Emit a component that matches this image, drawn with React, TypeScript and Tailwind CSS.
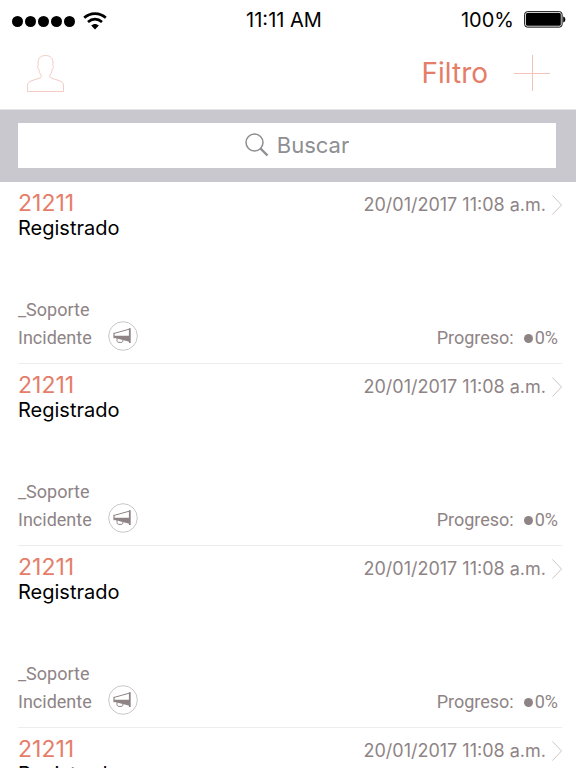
import React, { useState } from 'react';

interface Ticket {
  id: number;
  code: string;
  status: string;
  date: string;
  group: string;
  type: string;
  progress: number;
}

const tickets: Ticket[] = [1, 2, 3, 4].map((id) => ({
  id,
  code: '21211',
  status: 'Registrado',
  date: '20/01/2017 11:08 a.m.',
  group: '_Soporte',
  type: 'Incidente',
  progress: 0
}));

const WifiIcon = () => (
  <svg width="24" height="18" viewBox="0 0 24 18" fill="none" aria-hidden="true">
    <path d="M1.2 5.8C7.2 0.2 16.8 0.2 22.8 5.8" stroke="black" strokeWidth="2.6" />
    <path d="M5 10C9.2 6.2 14.8 6.2 19 10" stroke="black" strokeWidth="2.6" />
    <path d="M8.2 13.6C10.3 11.4 13.7 11.4 15.8 13.6L12 17.6Z" fill="black" />
  </svg>
);

const BatteryIcon = () => (
  <svg width="42" height="18" viewBox="0 0 42 18" fill="none" aria-hidden="true">
    <rect x="0.7" y="0.7" width="37.4" height="15.4" rx="2.6" stroke="black" strokeWidth="1" />
    <rect x="2" y="2" width="34.8" height="12.8" rx="1.4" fill="black" />
    <path d="M39.2 5.5C42 6 42 11 39.2 11.5Z" fill="black" />
  </svg>
);

const PersonIcon = () => (
  <svg width="38" height="38" viewBox="0 0 38 38" fill="none" aria-hidden="true">
    <path
      d="M0.5 37.5V32C0.5 28.8 2 27.6 5 26.6L12 24.3C14 23.6 14.6 22.8 14.2 21.2C12.9 19.8 12.2 18 12 15.8C10.6 15 10.3 12 11.3 11.3C10.2 5 13 1.5 18.5 1.5C24 1.5 26.9 5 25.8 11.3C26.8 12 26.5 15 25 15.8C24.8 18 24.2 19.8 22.9 21.2C22.5 22.8 23.1 23.6 25 24.3L32 26.6C35 27.6 36.5 28.8 36.5 32V37.5Z"
      stroke="#f3cbc4"
    />
  </svg>
);

const MegaphoneIcon = () => (
  <svg width="30" height="30" viewBox="0 0 30 30" fill="none" aria-hidden="true">
    <circle cx="15" cy="15" r="14.3" stroke="#c4c0c1" strokeWidth="0.9" />
    <path d="M6.2 12.4L21.8 8" stroke="#8e8486" strokeWidth="1" />
    <path d="M6 14.8H21.5V20.8L6 16.8Z" fill="#8e8486" />
    <path d="M6 11.8V17.2" stroke="#8e8486" strokeWidth="1.2" />
    <path d="M21.8 7.2V22" stroke="#8e8486" strokeWidth="1.8" />
    <path d="M9 17V19.4C9 20.8 9.8 21.4 11 21.4H13C14.4 21.4 15 20.6 15 19" stroke="#8e8486" strokeWidth="1" />
  </svg>
);

const TicketRow: React.FC<{ ticket: Ticket }> = ({ ticket }) => (
  <li className="pl-[18px] pr-3.5">
    <a href="#" className="flex min-h-[182px] flex-col justify-between border-b border-[#ededed] pt-2 pb-3">
      <div className="flex items-start justify-between">
        <div>
          <h2 className="text-[23px] leading-[26px] text-[#e57d69]">{ticket.code}</h2>
          <p className="text-[20px] leading-6 text-black">{ticket.status}</p>
        </div>
        <div className="flex items-center gap-1.5 pt-1 text-[18px] leading-[22px]">
          <time>{ticket.date}</time>
          <svg width="10" height="20" viewBox="0 0 10 20" fill="none" aria-hidden="true">
            <path d="M0.5 0.5L9.5 10L0.5 19.5" stroke="#c9c7c8" />
          </svg>
        </div>
      </div>
      <div className="font-['Roboto',sans-serif] text-[18px] leading-[22px]">
        <p>{ticket.group}</p>
        <div className="flex items-center justify-between">
          <div className="flex items-center gap-4">
            <span className="pt-1">{ticket.type}</span>
            <MegaphoneIcon />
          </div>
          <div className="flex items-center pt-1 pr-1">
            <span className="mr-2.5">Progreso:</span>
            <span className="mr-0.5 size-[9px] rounded-full bg-[#8e8486]" />
            <span>{ticket.progress}%</span>
          </div>
        </div>
      </div>
    </a>
  </li>
);

export default function App() {
  const [query, setQuery] = useState('');

  return (
    <div className="flex h-screen flex-col overflow-hidden bg-white font-['Inter',sans-serif] text-[#8e8486]">
      <div className="flex h-10 items-center justify-between pl-3 pr-2.5 text-[20px] leading-6 text-black">
        <div className="flex items-center gap-2 pt-0.5">
          <div className="flex gap-0.5">
            {[0, 1, 2, 3, 4].map((dot) => (
              <span key={dot} className="size-[11px] rounded-full bg-black" />
            ))}
          </div>
          <WifiIcon />
        </div>
        <span>11:11 AM</span>
        <div className="flex items-center justify-end gap-2.5">
          <span>100%</span>
          <BatteryIcon />
        </div>
      </div>

      <header className="flex h-[70px] items-center justify-between border-b border-[#e4e4e4] pl-[27px] pr-[26px] pb-1">
        <button type="button" aria-label="Perfil">
          <PersonIcon />
        </button>
        <div className="flex items-center gap-[26px]">
          <button type="button" className="text-[28px] leading-9 text-[#e57d69]">Filtro</button>
          <button type="button" aria-label="Agregar">
            <svg width="36" height="36" viewBox="0 0 36 36" fill="none" aria-hidden="true">
              <path d="M18.5 0V36M0 18.5H36" stroke="#f4c3ba" />
            </svg>
          </button>
        </div>
      </header>

      <div className="bg-[#c9c8ce] pl-[18px] pr-5 pt-[13px] pb-3.5">
        <label className="flex h-[45px] items-center justify-center gap-2 bg-white pb-0.5 pl-5">
          <svg width="24" height="24" viewBox="0 0 24 24" fill="none" stroke="#8e8e93" aria-hidden="true">
            <circle cx="9.5" cy="9.5" r="8.5" strokeWidth="1.5" />
            <path d="M15.5 15.5L22.5 22.5" strokeWidth="2.4" />
          </svg>
          <input
            type="text"
            aria-label="Buscar"
            placeholder="Buscar"
            value={query}
            onChange={(e) => setQuery(e.target.value)}
            className="[field-sizing:content] text-[22px] leading-7 text-black outline-none placeholder:text-[#8e8e93]"
          />
        </label>
      </div>

      <ul className="min-h-0 flex-1 overflow-y-auto [scrollbar-width:none]">
        {tickets.map((ticket) => (
          <TicketRow key={ticket.id} ticket={ticket} />
        ))}
      </ul>
    </div>
  );
}
